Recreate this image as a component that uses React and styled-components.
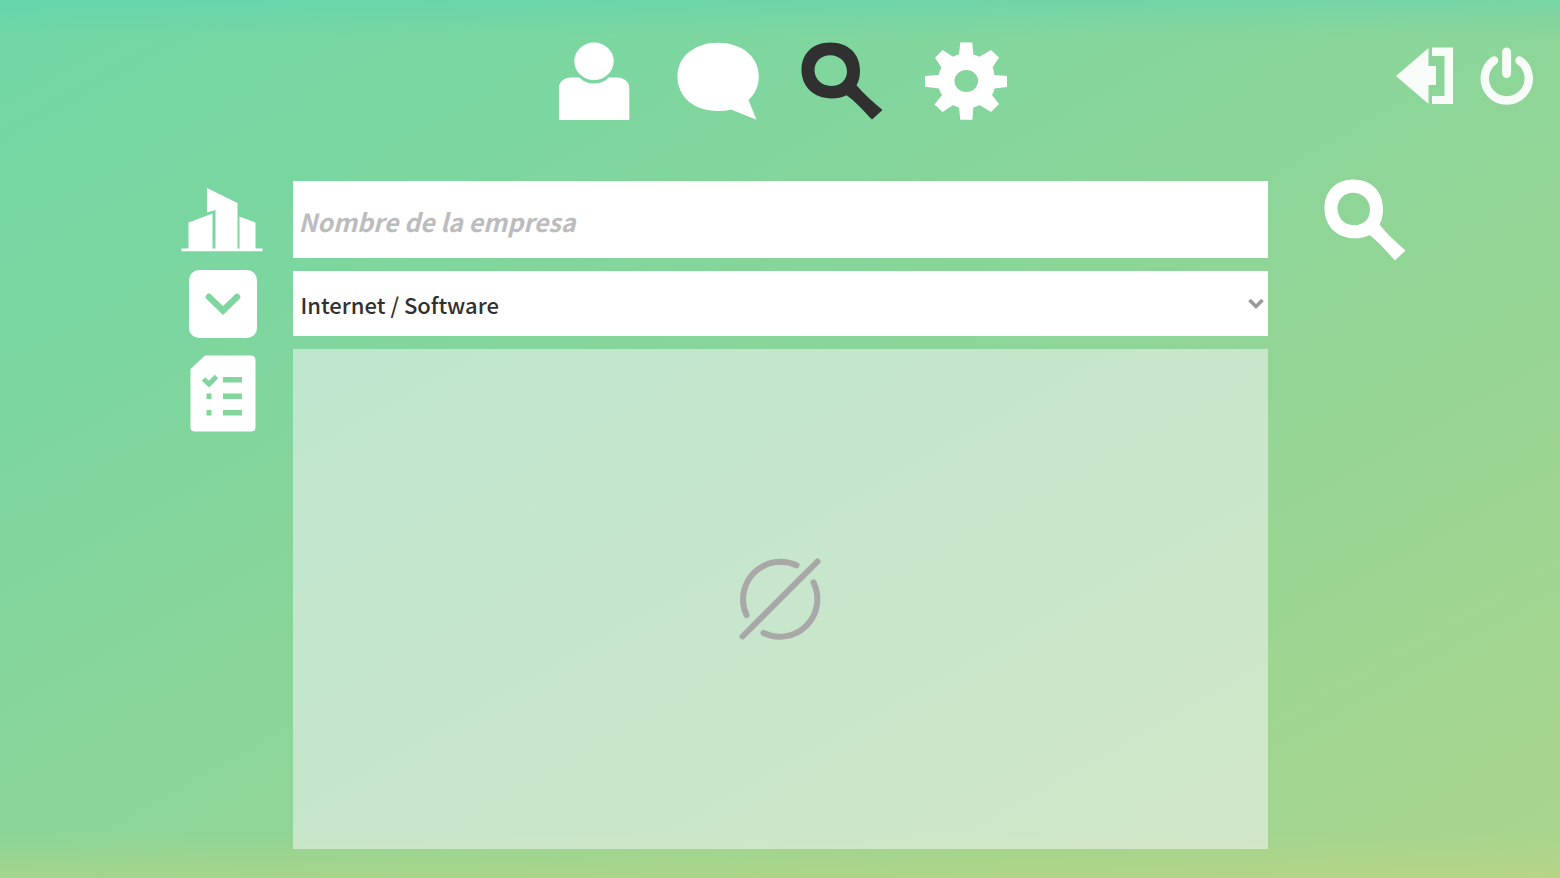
import React, { useState } from 'react';
import styled, { createGlobalStyle } from 'styled-components';

const white = "#ffffff";
const offWhite = "#f7fcf8";
const dark = "#303030";
const grey = "#a8a8a8";
const greyArrow = "#999999";
const placeholder = "#bcbcbe";

const GlobalStyle = createGlobalStyle`
    * {
        box-sizing: border-box;
    }
    body {
        margin: 0;
        font-family: "Noto Sans CJK JP", "Noto Sans", sans-serif;
        color: ${dark};
    }
`

const Page = styled.div`
    display: flex;
    flex-direction: column;
    min-height: 100vh;
    padding-bottom: 29px;
    background:
        linear-gradient(to bottom, rgba(80, 212, 190, 0.35), rgba(80, 212, 190, 0) 36px),
        linear-gradient(to top, rgba(200, 212, 120, 0.4), rgba(200, 212, 120, 0) 46px),
        linear-gradient(to bottom right, #70d7a5 0%, #7dd69f 25%, #8dd598 52%, #9dd592 78%, #aad58e 100%);
`

const Header = styled.header`
    display: grid;
    grid-template-columns: 1fr auto 1fr;
    padding: 42px 26px 0;
    height: 181px;
`

const Nav = styled.nav`
    grid-column: 2;
    display: flex;
    align-items: flex-start;
    gap: 42px;
`

const Session = styled.div`
    display: flex;
    align-items: flex-start;
    justify-content: flex-end;
    gap: 27px;
    padding-top: 5px;
`

const IconButton = styled.button`
    display: block;
    padding: 0;
    border: 0;
    background: none;
    color: ${props => props.$color || white};
    cursor: pointer;

    svg {
        display: block;
    }
`

const Form = styled.form`
    flex: 1;
    display: grid;
    grid-template-columns: 1fr 62.5% 1fr;
    grid-template-rows: 77px 65px 1fr;
    row-gap: 13px;
`

const Side = styled.label`
    display: flex;
    align-items: ${props => props.$top ? "flex-start" : "center"};
    justify-content: center;
    justify-self: end;
    width: 84px;
    margin-right: 28px;
    padding-top: ${props => props.$top || 0}px;
    color: ${white};

    svg {
        flex: none;
    }
`

const Submit = styled(IconButton)`
    align-self: center;
    justify-self: start;
    margin-left: 56px;
`

const NameInput = styled.input`
    width: 100%;
    padding: 2px 6px 0;
    border: 0;
    border-radius: 0;
    background: ${white};
    color: ${dark};
    font: italic 700 25px "Noto Sans CJK JP", "Noto Sans", sans-serif;
    outline: none;

    &::placeholder {
        color: ${placeholder};
        opacity: 1;
    }
`

const SelectBox = styled.div`
    position: relative;
    display: grid;

    svg {
        position: absolute;
        right: 4px;
        top: 50%;
        transform: translateY(-50%);
        color: ${greyArrow};
        pointer-events: none;
    }
`

const Select = styled.select`
    appearance: none;
    width: 100%;
    padding: 0 8px;
    border: 0;
    border-radius: 0;
    background: ${white};
    color: ${dark};
    font: 500 22px "Noto Sans CJK JP", "Noto Sans", sans-serif;
    outline: none;
`

const Results = styled.section`
    grid-column: 2;
    display: flex;
    align-items: center;
    justify-content: center;
    min-height: 200px;
    background: rgba(253, 247, 255, 0.5);
    color: ${grey};
`

const UserIcon = () => (
    <svg width="82" height="78" viewBox="0 0 82 78" fill="currentColor" aria-hidden="true">
        <ellipse cx="41" cy="19.3" rx="19.7" ry="18.8" />
        <path d="M6 78V46C6 40 11 35.500 18 35.500H26.500C30 39.500 35 41.500 41 41.500S52 39.500 55.500 35.500H64C71 35.500 76.300 40 76.300 46V78Z" />
    </svg>
)

const ChatIcon = () => (
    <svg width="82" height="78" viewBox="0 0 82 78" fill="currentColor" aria-hidden="true">
        <path d="M41 .7C64 .7 81.800 14 81.800 34C81.800 43 78.500 52 71.500 58L79.500 77.800L54 67.500C50 68.600 45.500 69 41 69C17 69 .5 55 .5 34.500C.5 14 18 .7 41 .7Z" />
    </svg>
)

const SearchIcon = ({ height }) => (
    <svg width="82" height={height} viewBox="0 0 82 82" preserveAspectRatio="none" fill="currentColor" aria-hidden="true">
        <path fillRule="evenodd" d="M29 .5C47 .5 59 12 59 30C59 36 58 41 55.500 45.500C63 55 72 63 81.500 71.500L71 81.500C62 72 55 63 45.500 56C41 58.500 36 59.300 30.500 59.300C13 59.300 .5 47 .5 29.500C.5 12 12 .5 29 .5ZM29 13.800C20 13.800 13.500 20.500 13.500 29.500C13.500 39 20.500 46.200 30 46.200C39.500 46.200 46 40 46 31C46 21 38.500 13.800 29 13.800Z" />
    </svg>
)

const GearIcon = () => (
    <svg width="82" height="78" viewBox="0 0 82 78" fill="currentColor" aria-hidden="true">
        <path fillRule="evenodd" d="M35.300 .5H47.300L48.300 12.500Q51.500 13.200 54.500 14.700L66 8L74 15.500L67.500 25.500Q69 29 69.500 33L82 34V45L69.500 46.500Q69 50 67 53L74 62L66 70L54.500 63Q51.500 64.500 48.300 65.500L47.300 77.700H35.300L34 65.500Q31 64.700 28 63L17.500 70L9.500 62.500L17 53Q15 50 14 46.500L0 44.800V34L13.500 33Q14.500 29 16.500 25.500L10 15.700L17.700 8L28 14.700Q31 13 34 12.500ZM41.300 28A11.800 11 0 1 0 41.300 50A11.800 11 0 1 0 41.300 28Z" />
    </svg>
)

const ExitIcon = () => (
    <svg width="57" height="58" viewBox="0 0 57 58" fill="currentColor" aria-hidden="true">
        <path d="M0 29L32.500 1V19H40V38H32.500V57Z" />
        <path d="M36 .5H57V57H36V49H48.500V9H36Z" />
    </svg>
)

const PowerIcon = () => (
    <svg width="54" height="58" viewBox="0 0 54 58" fill="none" stroke="currentColor" strokeLinecap="round" aria-hidden="true">
        <path strokeWidth="9" d="M26.600 5V26.500" />
        <path strokeWidth="8.500" d="M14 13.500A22 22 0 1 0 39.500 13.500" />
    </svg>
)

const CompanyIcon = () => (
    <svg width="84" height="64" viewBox="0 0 84 64" fill="currentColor" aria-hidden="true">
        <path d="M.5 60.500H81.500V63.200H.5Z" />
        <path d="M7.500 61V34.500L31.500 25.500V61Z" />
        <path d="M26 0L56.500 15V61H34.500V22L26 24.500Z" />
        <path d="M58.500 61V28.500L74.500 34.500V61Z" />
    </svg>
)

const DropIcon = () => (
    <svg width="68" height="68" viewBox="0 0 68 68" aria-hidden="true">
        <rect width="68" height="68" rx="10" fill="currentColor" />
        <path d="M20 27L34 40.500L48 27" fill="none" stroke="#7fd69e" strokeWidth="6.500" strokeLinecap="round" />
    </svg>
)

const ListIcon = () => (
    <svg width="66" height="78" viewBox="0 0 66 78" aria-hidden="true">
        <path d="M15 .5H61Q65.500 .5 65.500 5V72Q65.500 76.500 61 76.500H5Q.5 76.500 .5 72V14Z" fill="currentColor" />
        <path d="M13.500 24L19 29L26.500 21.500" fill="none" stroke="#80d69d" strokeWidth="5" />
        <path d="M33 22H52V27.500H33ZM33 38.500H52V44H33ZM33 55H52V60.500H33ZM16.500 38.500H21.500V44H16.500ZM16.500 55H21.500V60.500H16.500Z" fill="#82d69b" />
    </svg>
)

const ArrowIcon = () => (
    <svg width="16" height="12" viewBox="0 0 16 12" fill="none" stroke="currentColor" strokeWidth="3.500" aria-hidden="true">
        <path d="M1.500 2L8 8.500L14.500 2" />
    </svg>
)

const EmptyIcon = () => (
    <svg width="82" height="82" viewBox="0 0 82 82" fill="none" stroke="currentColor" strokeWidth="6" strokeLinecap="round" aria-hidden="true">
        <path d="M3.500 78.500L78.500 3.500" />
        <path d="M57.500 7.200A37.600 37.600 0 0 0 7.500 57" />
        <path d="M74.500 24.500A37.600 37.600 0 0 1 24.500 75" />
    </svg>
)

const sectors = ["Internet / Software"];

const App = () => {
    const [name, setName] = useState("");
    const [sector, setSector] = useState(sectors[0]);

    return (
        <Page>
            <GlobalStyle />
            <Header>
                <Nav>
                    <IconButton type="button" aria-label="Perfil"><UserIcon /></IconButton>
                    <IconButton type="button" aria-label="Mensajes"><ChatIcon /></IconButton>
                    <IconButton type="button" aria-label="Buscar" $color={dark}><SearchIcon height={78} /></IconButton>
                    <IconButton type="button" aria-label="Ajustes"><GearIcon /></IconButton>
                </Nav>
                <Session>
                    <IconButton type="button" aria-label="Cerrar sesión" $color={offWhite}><ExitIcon /></IconButton>
                    <IconButton type="button" aria-label="Salir" $color={offWhite}><PowerIcon /></IconButton>
                </Session>
            </Header>
            <Form onSubmit={e => e.preventDefault()}>
                <Side htmlFor="company" aria-label="Nombre de la empresa" $top={7}><CompanyIcon /></Side>
                <NameInput
                    id="company"
                    type="text"
                    placeholder="Nombre de la empresa"
                    value={name}
                    onChange={e => setName(e.target.value)}
                />
                <Submit type="submit" aria-label="Buscar empresa"><SearchIcon height={82} /></Submit>

                <Side htmlFor="sector" aria-label="Sector"><DropIcon /></Side>
                <SelectBox>
                    <Select id="sector" value={sector} onChange={e => setSector(e.target.value)}>
                        {sectors.map(s => <option key={s} value={s}>{s}</option>)}
                    </Select>
                    <ArrowIcon />
                </SelectBox>
                <span />

                <Side as="div" $top={6}><ListIcon /></Side>
                <Results aria-label="Resultados">
                    <EmptyIcon />
                </Results>
            </Form>
        </Page>
    )
}

export default App;
